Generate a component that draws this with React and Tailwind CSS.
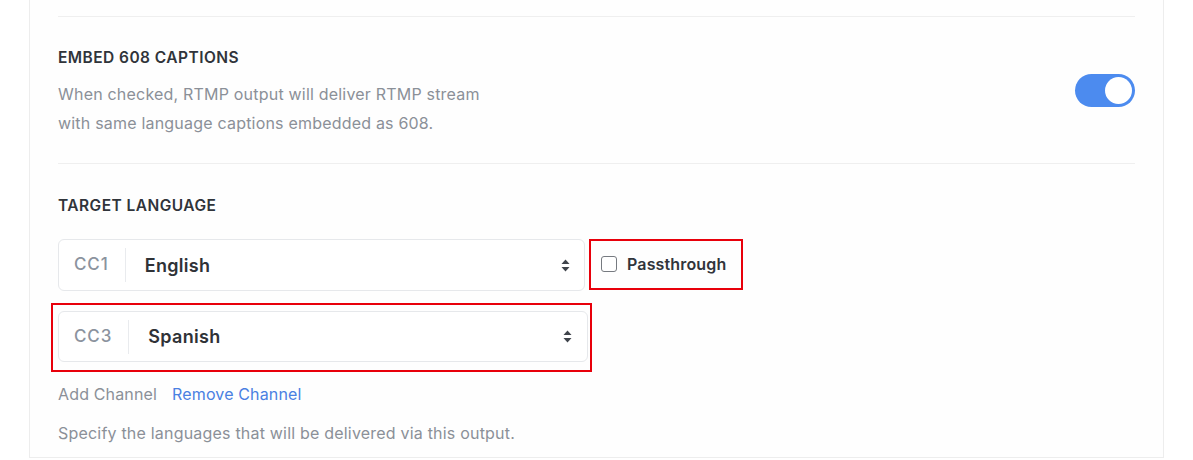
import React, { useState } from 'react';

const font = { fontFamily: 'Inter, "Liberation Sans", sans-serif' };

function SortArrows() {
  return (
    <svg width="9" height="13" viewBox="0 0 9 13" className="shrink-0">
      <path d="M4.5 0.5 L8.5 5 L0.5 5 Z" fill="#3f444b" />
      <path d="M4.5 12.5 L8.5 8 L0.5 8 Z" fill="#3f444b" />
    </svg>
  );
}

function LangSelect({ channel, value, className = '' }) {
  return (
    <div className={`flex items-center border border-[#e6e8eb] rounded-[6px] bg-white ${className}`}>
      <div className="pl-[15px] pr-4 text-[17px] tracking-[0.9px] text-[#8b939e] font-medium">{channel}</div>
      <div className="w-px h-[34px] bg-[#e9ebee]" />
      <div className="flex-1 pl-[19px] text-[18px] tracking-[0.3px] font-semibold text-[#2f3237]">{value}</div>
      <SortArrows />
    </div>
  );
}

export default function App() {
  const [embed, setEmbed] = useState(true);
  const [passthrough, setPassthrough] = useState(false);

  return (
    <div className="h-[460px] bg-white overflow-hidden" style={font}>
      <div className="mx-[29px] h-[458px] border-x border-b border-[#ededed] bg-[#fefefe] px-[28px] pt-4">
        <div className="h-px bg-[#efefef]" />

        {/* EMBED 608 */}
        <div className="flex items-center justify-between">
          <div className="pt-[31px] pb-[25px]">
            <h3 className="text-[15.5px] leading-5 font-semibold text-[#30343a] tracking-[0.45px]">EMBED 608 CAPTIONS</h3>
            <p className="mt-[12px] text-[16px] leading-[29px] tracking-[0.2px] text-[#8b9098]">
              When checked, RTMP output will deliver RTMP stream
              <br />
              with same language captions embedded as 608.
            </p>
          </div>
          <button
            onClick={() => setEmbed(!embed)}
            className={`w-[60px] h-[33px] rounded-full p-[3px] flex ${embed ? 'bg-[#4c8bef] justify-end' : 'bg-gray-300 justify-start'}`}
          >
            <span className="w-[27px] h-[27px] rounded-full bg-white" />
          </button>
        </div>

        <div className="h-px bg-[#efefef]" />

        {/* TARGET LANGUAGE */}
        <div className="pt-[32px]">
          <h3 className="text-[15.5px] leading-5 font-semibold text-[#30343a] tracking-[0.45px]">TARGET LANGUAGE</h3>

          <div className="mt-[23px] flex items-center">
            <LangSelect channel="CC1" value="English" className="w-[527px] h-[52px] pr-[14px]" />
            <label className="ml-[4px] -mt-[2px] w-[154px] h-[51px] border-2 border-[#e8000b] flex items-center pl-[10px] gap-[10px] cursor-pointer">
              <input
                type="checkbox"
                checked={passthrough}
                onChange={() => setPassthrough(!passthrough)}
                className="w-4 h-4 appearance-none rounded-[3px] border-[1.5px] border-[#767a80] bg-white"
              />
              <span className="text-[16px] tracking-[0.15px] font-semibold text-[#31353b]">Passthrough</span>
            </label>
          </div>

          <div className="mt-[12px] -ml-[7px] w-[541px] border-2 border-[#e8000b] pl-[5px] pr-[2px] pt-[6px] pb-[8px]">
            <LangSelect channel="CC3" value="Spanish" className="w-[530px] h-[51px] pr-[15px]" />
          </div>

          <div className="mt-[12px] flex gap-[15px] text-[16px] tracking-[0.15px] leading-5">
            <span className="text-[#8b9098]">Add Channel</span>
            <span className="text-[#4a80e2]">Remove Channel</span>
          </div>

          <p className="mt-[19px] text-[16px] tracking-[0.2px] leading-5 text-[#8b9098]">
            Specify the languages that will be delivered via this output.
          </p>
        </div>
      </div>
    </div>
  );
}
